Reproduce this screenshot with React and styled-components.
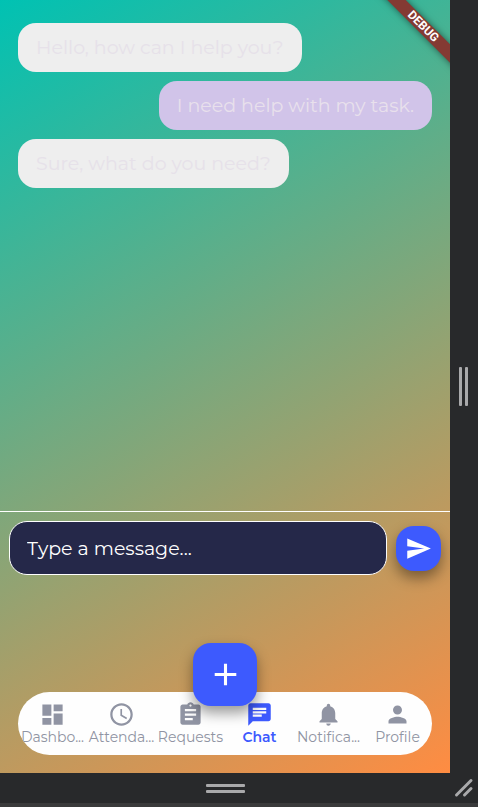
import React from "react";
import styled, { createGlobalStyle } from "styled-components";
import {
  MdAccessTime,
  MdAdd,
  MdAssignment,
  MdChat,
  MdDashboard,
  MdNotifications,
  MdPerson,
  MdSend,
} from "react-icons/md";

const GlobalStyle = createGlobalStyle`
  *, *::before, *::after { box-sizing: border-box; }
  body {
    margin: 0;
    background: #28292b;
    font-family: Montserrat, Inter, sans-serif;
  }
`;

const Frame = styled.div`
  display: grid;
  grid-template-columns: 1fr 28px;
  grid-template-rows: 1fr 30px;
  min-height: 100vh;
  border-bottom: 4px solid #3a3a3b;
  background: #28292b;
`;

const Screen = styled.main`
  position: relative;
  display: flex;
  flex-direction: column;
  min-width: 0;
  overflow: hidden;
  background: linear-gradient(150deg, #00c2b3, #ff8c42);
`;

const RibbonCorner = styled.div`
  position: absolute;
  top: 0;
  right: 0;
  width: 80px;
  height: 80px;
  overflow: hidden;
  pointer-events: none;
`;

const Ribbon = styled.div`
  position: absolute;
  top: 20px;
  left: -7px;
  width: 120px;
  transform: rotate(45deg);
  background: #843a33;
  box-shadow: 0 0 7px rgba(0, 0, 0, 0.5);
  color: #fff;
  font: 700 12px/13px Roboto, sans-serif;
  text-align: center;
`;

const Messages = styled.ul`
  flex: 1;
  display: flex;
  flex-direction: column;
  gap: 9px;
  margin: 0;
  padding: 23px 18px;
  list-style: none;
`;

const Bubble = styled.li`
  align-self: ${(p) => (p.$mine ? "flex-end" : "flex-start")};
  padding: 12px 18px;
  border-radius: 18px;
  background: ${(p) => (p.$mine ? "#d1c4e9" : "#eeeeee")};
  color: ${(p) => (p.$mine ? "#e8e0ec" : "#e6e1e9")};
  font-size: 19px;
  line-height: 25px;
`;

const Composer = styled.form`
  display: flex;
  align-items: center;
  gap: 9px;
  padding: 9px;
  border-top: 1px solid #fff;
`;

const MessageInput = styled.input`
  flex: 1;
  min-width: 0;
  height: 54px;
  padding: 0 17px;
  border: 1px solid #fff;
  border-radius: 18px;
  background: #252849;
  color: #fff;
  font-family: inherit;
  font-size: 19px;
  &::placeholder {
    color: #fff;
    opacity: 1;
  }
`;

const IconButton = styled.button`
  display: grid;
  place-items: center;
  padding: 0;
  border: 0;
  border-radius: 18px;
  background: #3d5afe;
  box-shadow: 0 7px 14px rgba(0, 0, 0, 0.4);
  color: #fff;
  cursor: pointer;
`;

const SendButton = styled(IconButton)`
  width: 45px;
  height: 45px;
`;

const AddButton = styled(IconButton)`
  position: absolute;
  top: -49px;
  left: 50%;
  width: 64px;
  height: 63px;
  transform: translateX(-50%);
`;

const Dock = styled.div`
  position: relative;
  margin: 108px 18px 18px;
`;

const NavBar = styled.nav`
  display: grid;
  grid-template-columns: repeat(6, minmax(0, 1fr));
  padding: 9px 0;
  border-radius: 32px;
  overflow: hidden;
  background: #fefefe;
`;

const NavItem = styled.a`
  display: flex;
  flex-direction: column;
  align-items: center;
  color: ${(p) => (p.$active ? "#3d5afe" : "#9094a3")};
  font-size: 14px;
  font-weight: ${(p) => (p.$active ? 600 : 400)};
  line-height: 18px;
  text-decoration: none;
  white-space: nowrap;
`;

const SideRail = styled.div`
  display: flex;
  align-items: center;
  justify-content: center;
  gap: 3px;
  padding-right: 2px;
`;

const BottomRail = styled.div`
  display: flex;
  flex-direction: column;
  align-items: center;
  justify-content: center;
  gap: 3px;
`;

const Grip = styled.span`
  width: ${(p) => (p.$vertical ? 3 : 39)}px;
  height: ${(p) => (p.$vertical ? 39 : 3)}px;
  border-radius: 1px;
  background: #a9a9ab;
`;

const Corner = styled.div`
  display: grid;
  place-items: center;
`;

const messages = [
  { text: "Hello, how can I help you?" },
  { text: "I need help with my task.", mine: true },
  { text: "Sure, what do you need?" },
];

const tabs = [
  { label: "Dashbo...", Icon: MdDashboard },
  { label: "Attenda...", Icon: MdAccessTime },
  { label: "Requests", Icon: MdAssignment },
  { label: "Chat", Icon: MdChat, active: true },
  { label: "Notifica...", Icon: MdNotifications },
  { label: "Profile", Icon: MdPerson },
];

export default function App() {
  return (
    <>
      <GlobalStyle />
      <Frame>
        <Screen>
          <Messages>
            {messages.map((m) => (
              <Bubble key={m.text} $mine={m.mine}>
                {m.text}
              </Bubble>
            ))}
          </Messages>
          <Composer onSubmit={(e) => e.preventDefault()}>
            <MessageInput aria-label="Message" placeholder="Type a message..." />
            <SendButton type="submit" aria-label="Send">
              <MdSend size={27} />
            </SendButton>
          </Composer>
          <Dock>
            <NavBar>
              {tabs.map(({ label, Icon, active }) => (
                <NavItem key={label} href="#" $active={active}>
                  <Icon size={27} />
                  {label}
                </NavItem>
              ))}
            </NavBar>
            <AddButton type="button" aria-label="Add">
              <MdAdd size={37} />
            </AddButton>
          </Dock>
          <RibbonCorner>
            <Ribbon>DEBUG</Ribbon>
          </RibbonCorner>
        </Screen>
        <SideRail>
          <Grip $vertical />
          <Grip $vertical />
        </SideRail>
        <BottomRail>
          <Grip />
          <Grip />
        </BottomRail>
        <Corner>
          <svg width="20" height="20" viewBox="0 0 20 20" stroke="#a9a9ab" strokeWidth="3" strokeLinecap="round">
            <path d="M2.5 17 17 2.5M10.5 17 17 10.5" />
          </svg>
        </Corner>
      </Frame>
    </>
  );
}
